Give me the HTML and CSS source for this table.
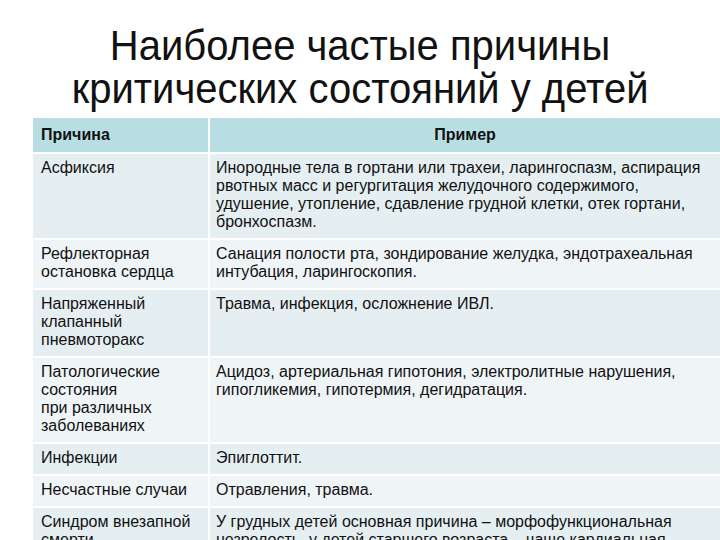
FILE: index.html
```html
<!DOCTYPE html>
<html lang="ru">
<head>
<meta charset="utf-8">
<title>Наиболее частые причины критических состояний у детей</title>
<link rel="stylesheet" href="styles.css">
</head>
<body>
<div class="slide">
  <h1 class="title"><span class="line">Наиболее частые причины</span><span class="line">критических состояний у детей</span></h1>
  <div class="table">
    <div class="cell head">Причина</div>
    <div class="cell head center">Пример</div>

    <div class="cell odd">Асфиксия</div>
    <div class="cell odd ex">Инородные тела в гортани или трахеи, ларингоспазм, аспирация<br>рвотных масс и регургитация желудочного содержимого,<br>удушение, утопление, сдавление грудной клетки, отек гортани,<br>бронхоспазм.</div>

    <div class="cell even">Рефлекторная<br>остановка сердца</div>
    <div class="cell even ex">Санация полости рта, зондирование желудка, эндотрахеальная<br>интубация, ларингоскопия.</div>

    <div class="cell odd">Напряженный<br>клапанный<br>пневмоторакс</div>
    <div class="cell odd ex">Травма, инфекция, осложнение ИВЛ.</div>

    <div class="cell even">Патологические<br>состояния<br>при различных<br>заболеваниях</div>
    <div class="cell even ex">Ацидоз, артериальная гипотония, электролитные нарушения,<br>гипогликемия, гипотермия, дегидратация.</div>

    <div class="cell odd">Инфекции</div>
    <div class="cell odd ex">Эпиглоттит.</div>

    <div class="cell even">Несчастные случаи</div>
    <div class="cell even ex">Отравления, травма.</div>

    <div class="cell odd">Синдром внезапной<br>смерти</div>
    <div class="cell odd ex">У грудных детей основная причина – морфофункциональная<br>незрелость, у детей старшего возраста – чаще кардиальная<br>патология.</div>
  </div>
</div>
</body>
</html>
```

FILE: styles.css
```css
html, body {
  margin: 0;
  padding: 0;
  background: #ffffff;
}

.slide {
  width: 720px;
  height: 540px;
  overflow: hidden;
  background: #ffffff;
  font-family: "Liberation Sans", Arial, sans-serif;
  color: #111111;
}

.title {
  margin: 0;
  padding-top: 24px;
  height: 118px;
  box-sizing: border-box;
  font-weight: normal;
  font-size: 43px;
  line-height: 43px;
  text-align: center;
  color: #111111;
  display: flex;
  flex-direction: column;
  align-items: center;
}

.title .line {
  display: block;
  white-space: nowrap;
  transform: scaleX(0.93);
}

.table {
  margin-left: 33px;
  width: 687px;
  display: grid;
  grid-template-columns: 175px 1fr;
  gap: 2px;
  background: #ffffff;
}

.cell {
  font-size: 16px;
  line-height: 18px;
  padding: 5px 8px 7px 8px;
  white-space: nowrap;
}

.ex {
  padding-left: 6px;
}

.head {
  background: #b8dee4;
  font-weight: bold;
  height: 34px;
  box-sizing: border-box;
  padding-top: 8px;
}

.center {
  text-align: center;
}

.odd {
  background: #e5eff1;
}

.even {
  background: #eff4f7;
}
```
